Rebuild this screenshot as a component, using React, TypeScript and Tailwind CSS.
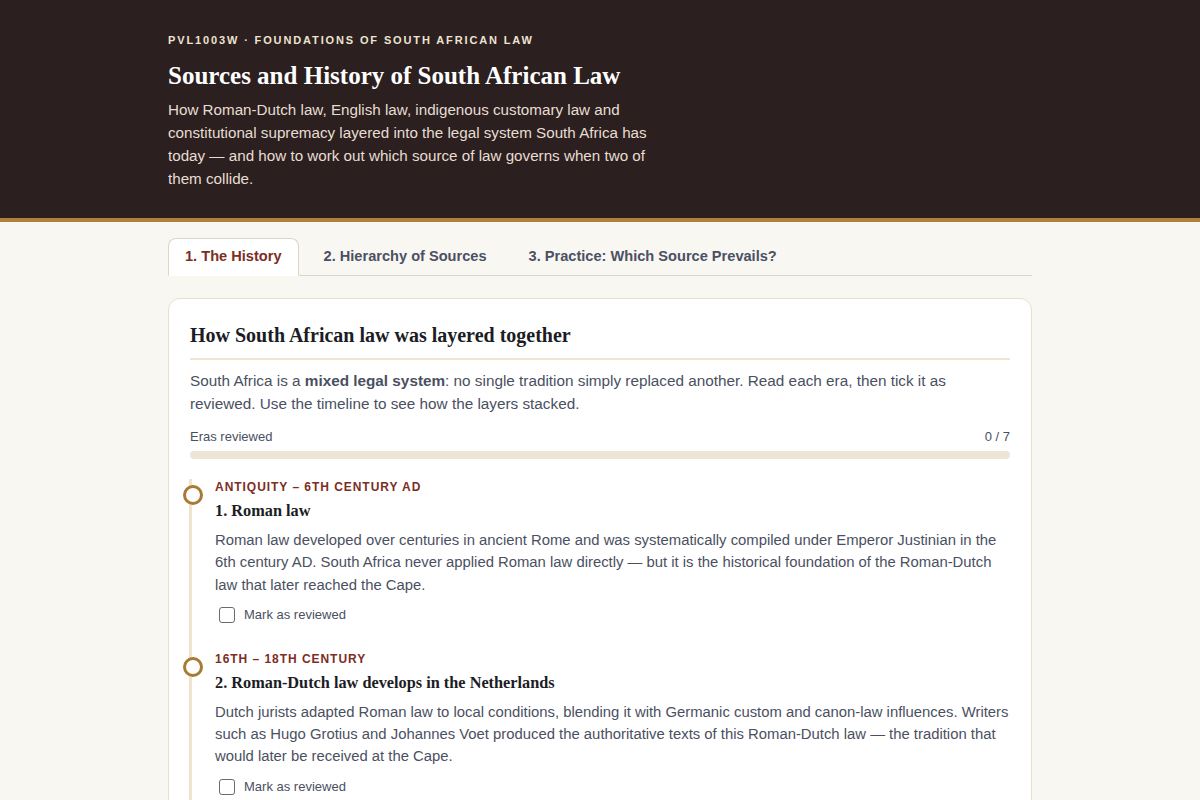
import React, { useState } from "react";

// ── Data ───────────────────────────────────────────────────────────
interface Era {
  period: string;
  title: string;
  body: string;
}

const ERAS: Era[] = [
  {
    period: "Antiquity – 6th century AD",
    title: "1. Roman law",
    body:
      "Roman law developed over centuries in ancient Rome and was systematically compiled under Emperor Justinian in the 6th century AD. South Africa never applied Roman law directly — but it is the historical foundation of the Roman-Dutch law that later reached the Cape.",
  },
  {
    period: "16th – 18th century",
    title: "2. Roman-Dutch law develops in the Netherlands",
    body:
      "Dutch jurists adapted Roman law to local conditions, blending it with Germanic custom and canon-law influences. Writers such as Hugo Grotius and Johannes Voet produced the authoritative texts of this Roman-Dutch law — the tradition that would later be received at the Cape.",
  },
  {
    period: "1652",
    title: "3. Reception at the Cape",
    body:
      "The Dutch East India Company established a refreshment station at the Cape and brought Roman-Dutch law with it. It became the common law of the settlement.",
  },
  {
    period: "1806 – 1910",
    title: "4. British rule and English law",
    body:
      "After the British occupation, English law heavily influenced procedure, evidence and commercial law, while Roman-Dutch law remained the common law.",
  },
  {
    period: "Pre-colonial – present",
    title: "5. Indigenous customary law",
    body:
      "Customary law of indigenous communities existed long before colonial settlement and continued to regulate family, succession and land matters.",
  },
  {
    period: "1910 – 1994",
    title: "6. Parliamentary sovereignty",
    body:
      "From Union onwards Parliament was sovereign: courts could not test Acts of Parliament against any higher norm.",
  },
  {
    period: "1994 / 1996 – present",
    title: "7. Constitutional supremacy",
    body:
      "The interim and final Constitutions made the Constitution the supreme law. All law and conduct inconsistent with it is invalid.",
  },
];

const TABS = ["1. The History", "2. Hierarchy of Sources", "3. Practice: Which Source Prevails?"];

const SANS = "font-['Liberation_Sans',Arial,sans-serif]";
const SERIF = "font-['Liberation_Serif','Times_New_Roman',serif]";

// ── Timeline item ──────────────────────────────────────────────────
const EraItem: React.FC<{ era: Era; checked: boolean; onToggle: () => void }> = ({
  era,
  checked,
  onToggle,
}) => (
  <div className="relative pb-[25px]">
    <div className="absolute left-[-32px] top-[6px] w-[20px] h-[20px] rounded-full border-[3px] border-[#a87b35] bg-white" />
    <p className="text-[12px] leading-[16px] font-bold uppercase tracking-[0.08em] text-[#7c2d24]">
      {era.period}
    </p>
    <h3 className={`${SERIF} mt-[6px] text-[16.3px] leading-[20px] font-bold text-[#1c1c24]`}>
      {era.title}
    </h3>
    <p className="mt-[8px] text-[14.85px] leading-[22.3px] text-[#4a5061]">{era.body}</p>
    <label className="mt-[8px] flex items-center gap-[9px] pl-[4px] text-[13px] leading-[22px] text-[#4a5061] cursor-pointer">
      <input
        type="checkbox"
        checked={checked}
        onChange={onToggle}
        className="w-[16px] h-[16px] appearance-none rounded-[3px] border border-[#6b6b6b] bg-white checked:bg-[#7c2d24]"
      />
      Mark as reviewed
    </label>
  </div>
);

// ── Main ───────────────────────────────────────────────────────────
export default function App() {
  const [tab, setTab] = useState(0);
  const [reviewed, setReviewed] = useState<boolean[]>(ERAS.map(() => false));
  const done = reviewed.filter(Boolean).length;

  return (
    <div className={`${SANS} min-h-screen bg-[#f9f7f2]`}>
      {/* Header */}
      <header className="bg-[#2b1f1f] border-b-4 border-[#b08038]">
        <div className="max-w-[896px] mx-auto px-4 pt-[33px] pb-[28px]">
          <p className="text-[11px] leading-[14px] font-bold uppercase tracking-[0.17em] text-[#eee3d0]">
            PVL1003W · Foundations of South African Law
          </p>
          <h1 className={`${SERIF} mt-[13px] text-[25px] leading-[32px] font-bold text-white`}>
            Sources and History of South African Law
          </h1>
          <p className="mt-[6px] max-w-[500px] text-[15.2px] leading-[23px] text-[#e7ddd2]">
            How Roman-Dutch law, English law, indigenous customary law and constitutional supremacy
            layered into the legal system South Africa has today — and how to work out which source of
            law governs when two of them collide.
          </p>
        </div>
      </header>

      <main className="max-w-[896px] mx-auto px-4 pt-[16px] pb-10">
        {/* Tabs */}
        <nav className="flex gap-[8px] border-b border-[#ddd6c8]">
          {TABS.map((t, i) => (
            <button
              key={t}
              onClick={() => setTab(i)}
              className={
                i === tab
                  ? "-mb-px px-[16px] h-[38px] text-[14.6px] font-bold text-[#7c2d24] bg-white border border-[#ddd6c8] border-b-white rounded-t-[8px]"
                  : "-mb-px px-[16px] h-[38px] text-[14.6px] font-bold text-[#4b5064] border border-transparent"
              }
            >
              {t}
            </button>
          ))}
        </nav>

        {/* Card */}
        <section className="mt-[22px] bg-white border border-[#e6dfd0] rounded-[12px] pl-[21px] pr-[19px] pt-[23px] pb-2">
          <div className="mr-[2px]">
            <h2 className={`${SERIF} text-[20px] leading-[26px] font-bold text-[#1c1c24] pb-[10px] border-b-2 border-[#f0e5d0]`}>
              How South African law was layered together
            </h2>
            <p className="mt-[9px] text-[15.3px] leading-[23px] text-[#4a5061]">
              South Africa is a <strong className="font-bold">mixed legal system</strong>: no single
              tradition simply replaced another. Read each era, then tick it as reviewed. Use the
              timeline to see how the layers stacked.
            </p>

            <div className="mt-[13px] flex justify-between text-[13px] leading-[18px] text-[#4a5061]">
              <span>Eras reviewed</span>
              <span>
                {done} / {ERAS.length}
              </span>
            </div>
            <div className="mt-[5px] h-[8px] rounded-full bg-[#ede6d8] overflow-hidden">
              <div
                className="h-full bg-[#a87b35] rounded-full"
                style={{ width: `${(done / ERAS.length) * 100}%` }}
              />
            </div>
          </div>

          {/* Timeline */}
          <div className="mt-[20px] -ml-px pl-[23px] border-l-[3px] border-[#f0e4cc]">
            {ERAS.map((era, i) => (
              <EraItem
                key={era.title}
                era={era}
                checked={reviewed[i]}
                onToggle={() =>
                  setReviewed((prev) => prev.map((v, idx) => (idx === i ? !v : v)))
                }
              />
            ))}
          </div>
        </section>
      </main>
    </div>
  );
}
